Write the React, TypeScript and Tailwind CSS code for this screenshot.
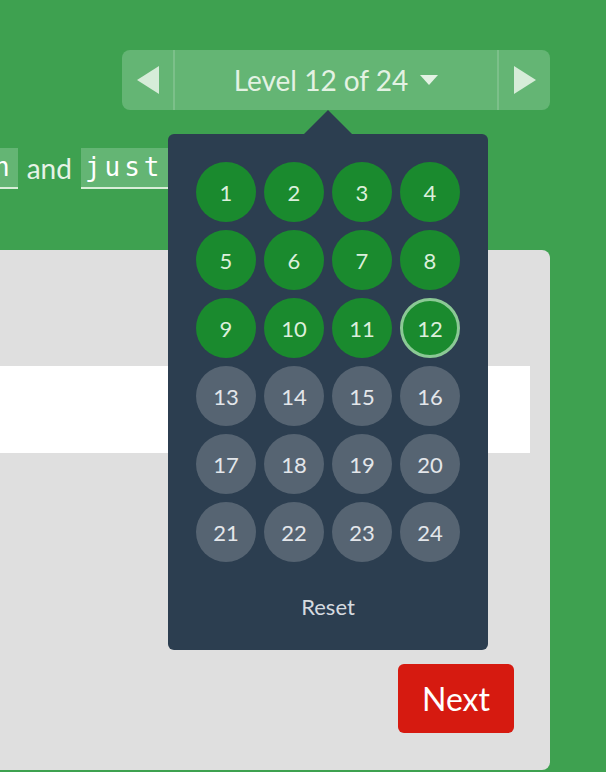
import React from "react";

const levels = Array.from({ length: 24 }, (_, i) => i + 1);
const current = 12;

const App: React.FC = () => {
  return (
    <div
      className="relative w-[606px] h-[772px] overflow-hidden bg-[#3ea150]"
      style={{ fontFamily: "Lato, 'Noto Sans', sans-serif" }}
    >
      {/* Level nav */}
      <div className="flex justify-end pt-[50px] pr-[56px]">
        <div className="flex h-[60px] w-[428px] rounded-[8px] bg-[#64b574] text-[#e3f2e3]">
          <button className="flex w-[53px] items-center justify-center border-r-2 border-[#7cc08a]">
            <svg width="22" height="28" viewBox="0 0 22 28">
              <path d="M22 0 L0 14 L22 28 Z" fill="#d6ecd8" />
            </svg>
          </button>
          <div className="flex flex-1 items-center justify-center gap-[12px] text-[28px]">
            <span>Level 12 of 24</span>
            <svg width="18" height="10" viewBox="0 0 18 10">
              <path d="M0 0 L18 0 L9 10 Z" fill="#e3f2e3" />
            </svg>
          </div>
          <button className="flex w-[53px] items-center justify-center border-l-2 border-[#7cc08a]">
            <svg width="22" height="28" viewBox="0 0 22 28">
              <path d="M0 0 L22 14 L0 28 Z" fill="#d6ecd8" />
            </svg>
          </button>
        </div>
      </div>

      {/* Instruction line */}
      <div className="mt-[38px] flex h-[40px] items-center whitespace-nowrap text-[28px] text-[#e6f3e6]">
        <code
          className="ml-[-10px] border-b-2 border-[#d8eed8] bg-[#64b574] px-[4px] tracking-[4px] text-white"
          style={{ fontFamily: "'DejaVu Sans Mono', monospace", fontSize: 26 }}
        >
          n
        </code>
        <span className="mx-[9px]">and</span>
        <code
          className="border-b-2 border-[#d8eed8] bg-[#64b574] px-[4px] tracking-[4px] text-white"
          style={{ fontFamily: "'DejaVu Sans Mono', monospace", fontSize: 26 }}
        >
          just
        </code>
      </div>

      {/* Editor panel */}
      <div className="mt-[62px] flex h-[520px] w-[550px] flex-col rounded-r-[8px] bg-[#dfdfdf]">
        <div className="mt-[116px] h-[87px] w-[530px] bg-white" />
        <div className="flex flex-1 items-end justify-end pb-[37px] pr-[36px]">
          <button className="flex h-[69px] w-[116px] items-center justify-center rounded-[6px] bg-[#d61a10] text-[32px] text-white">
            Next
          </button>
        </div>
      </div>

      {/* Level picker popup */}
      <div className="absolute left-[168px] top-[110px] flex w-[320px] flex-col items-center">
        <svg width="48" height="24" viewBox="0 0 48 24" className="block">
          <path d="M0 24 L24 0 L48 24 Z" fill="#2c3e50" />
        </svg>
        <div className="flex w-[320px] flex-col items-center rounded-[6px] bg-[#2c3e50] p-[28px] pb-0">
          <div className="grid grid-cols-4 gap-[8px]">
            {levels.map((n) => (
              <div
                key={n}
                className={
                  n < current
                    ? "flex h-[60px] w-[60px] items-center justify-center rounded-full bg-[#1a8a2e] text-[22px] text-[#dcefdc]"
                    : n === current
                    ? "flex h-[60px] w-[60px] items-center justify-center rounded-full border-[3px] border-[#8bc995] bg-[#1a8a2e] text-[22px] text-[#dcefdc]"
                    : "flex h-[60px] w-[60px] items-center justify-center rounded-full bg-[#566472] text-[22px] text-[#e3e6ea]"
                }
              >
                {n}
              </div>
            ))}
          </div>
          <div className="flex h-[88px] items-center justify-center text-[22px] text-[#d6dbe0]">
            Reset
          </div>
        </div>
      </div>
    </div>
  );
};

export default App;
